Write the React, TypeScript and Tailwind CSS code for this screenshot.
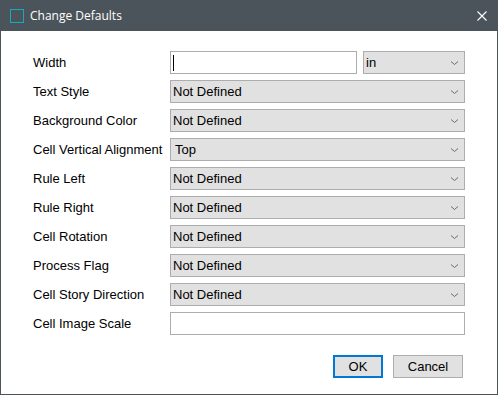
import React from "react";

const Chevron = () => (
  <svg width="9" height="6" viewBox="0 0 9 6" className="shrink-0">
    <path d="M1 1.5 L4.5 4.5 L8 1.5" fill="none" stroke="#6b6b6b" strokeWidth="1" />
  </svg>
);

const Select = ({ value, indent = false }: { value: string; indent?: boolean }) => (
  <div className="h-[23px] flex-1 flex items-center justify-between border border-[#adadad] bg-[#e1e1e1] pr-[5px]">
    <span className={indent ? "pl-[4px]" : "pl-[2px]"}>{value}</span>
    <Chevron />
  </div>
);

const Label = ({ children }: { children: React.ReactNode }) => (
  <div className="w-[137px] shrink-0 whitespace-nowrap">{children}</div>
);

export default function App() {
  const rows: { label: string; value: string; indent?: boolean }[] = [
    { label: "Text Style", value: "Not Defined" },
    { label: "Background Color", value: "Not Defined" },
    { label: "Cell Vertical Alignment", value: "Top", indent: true },
    { label: "Rule Left", value: "Not Defined" },
    { label: "Rule Right", value: "Not Defined" },
    { label: "Cell Rotation", value: "Not Defined" },
    { label: "Process Flag", value: "Not Defined" },
    { label: "Cell Story Direction", value: "Not Defined" },
  ];
  return (
    <div
      className="w-[498px] h-[395px] border border-[#4b545a] flex flex-col bg-white text-[13px] text-black"
      style={{ fontFamily: '"Liberation Sans", Arial, sans-serif' }}
    >
      <div className="h-[30px] bg-[#4b545a] flex items-center shrink-0">
        <div className="ml-[9px] w-[14px] h-[14px] border border-[#18a9bd]" />
        <div className="ml-[6px] text-white text-[12px]" style={{ fontFamily: '"Open Sans", "Noto Sans", sans-serif' }}>
          Change Defaults
        </div>
        <div className="ml-auto mr-[10px]">
          <svg width="10" height="10" viewBox="0 0 10 10">
            <path d="M0.5 0.5 L9.5 9.5 M9.5 0.5 L0.5 9.5" stroke="#ffffff" strokeWidth="1.1" />
          </svg>
        </div>
      </div>
      <div className="flex-1 flex flex-col pl-[32px] pr-[31px] pt-[20px]">
        <div className="flex flex-col gap-[6px] pr-px">
          <div className="flex items-center h-[23px]">
            <Label>Width</Label>
            <div className="flex flex-1 gap-[6px] h-full">
              <div className="w-[187px] h-full border border-[#adadad] bg-white flex items-center pl-[2px]">
                <div className="w-px h-[16px] bg-black" />
              </div>
              <Select value="in" />
            </div>
          </div>
          {rows.map((r) => (
            <div key={r.label} className="flex items-center h-[23px]">
              <Label>{r.label}</Label>
              <Select value={r.value} indent={r.indent} />
            </div>
          ))}
          <div className="flex items-center h-[23px]">
            <Label>Cell Image Scale</Label>
            <div className="flex-1 h-full border border-[#adadad] bg-white" />
          </div>
        </div>
        <div className="flex justify-end gap-[10px] mt-[20px] pr-[3px]">
          <button className="w-[50px] h-[23px] border-2 border-[#0078d7] bg-[#e1e1e1] flex items-center justify-center">
            OK
          </button>
          <button className="w-[70px] h-[23px] border border-[#adadad] bg-[#e1e1e1] flex items-center justify-center">
            Cancel
          </button>
        </div>
      </div>
    </div>
  );
}
